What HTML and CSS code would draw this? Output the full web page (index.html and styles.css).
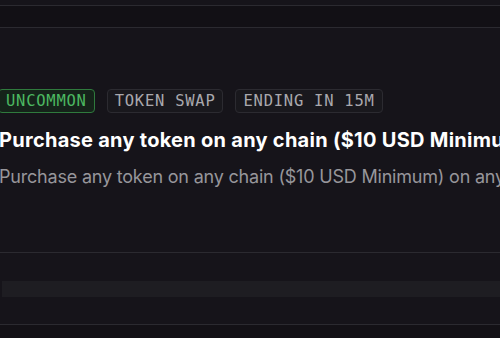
FILE: index.html
```html
<!DOCTYPE html>
<html>
<head>
<meta charset="utf-8">
<link rel="stylesheet" href="styles.css">
</head>
<body>
<div class="top-strip"></div>
<div class="header-band"></div>
<main class="quest">
  <div class="badges">
    <span class="badge badge-green">UNCOMMON</span>
    <span class="badge">TOKEN SWAP</span>
    <span class="badge">ENDING IN 15M</span>
  </div>
  <h1 class="title">Purchase any token on any chain ($10 USD Minimum) on any supported network</h1>
  <p class="desc">Purchase any token on any chain ($10 USD Minimum) on any supported network using the swap.</p>
</main>
<section class="lower">
  <div class="bar"></div>
</section>
<div class="footer"></div>
</body>
</html>
```

FILE: styles.css
```css
* { box-sizing: border-box; }
html, body {
  margin: 0;
  padding: 0;
  background: #16141a;
  width: 500px;
  height: 338px;
  overflow: hidden;
}
body {
  font-family: Inter, "Noto Sans", sans-serif;
}
.top-strip {
  height: 6px;
  border-bottom: 1px solid #2b2a30;
}
.header-band {
  height: 22px;
  background: #121015;
  border-bottom: 1px solid #2b2a30;
}
.quest {
  padding: 61px 0 0 0;
  height: 225px;
  border-bottom: 1px solid #2b2a30;
  white-space: nowrap;
  overflow: hidden;
}
.badges {
  display: flex;
  gap: 12px;
  margin-left: -2px;
}
.badge {
  display: inline-flex;
  align-items: center;
  height: 24px;
  padding: 0 7px;
  border: 1px solid #2c2b31;
  border-radius: 4px;
  background: #19181d;
  color: #a9a8ad;
  font-family: "DejaVu Sans Mono", "Liberation Mono", monospace;
  font-size: 15.5px;
  letter-spacing: 0.75px;
}
.badge-green {
  color: #4cb861;
  border-color: #2f7a3d;
  background: #15231a;
}
.title {
  margin: 15px 0 0 -1px;
  font-size: 20px;
  line-height: 25px;
  font-weight: 700;
  color: #ffffff;
  letter-spacing: 0.27px;
}
.desc {
  margin: 12px 0 0 -1px;
  font-size: 18px;
  line-height: 23px;
  color: #97969b;
  letter-spacing: -0.2px;
}
.lower {
  height: 72px;
  padding-top: 28px;
  border-bottom: 1px solid #2b2a30;
}
.bar {
  margin-left: 2px;
  height: 16px;
  background: #1e1d22;
}
.footer {
  height: 20px;
  background: #131116;
}
```
